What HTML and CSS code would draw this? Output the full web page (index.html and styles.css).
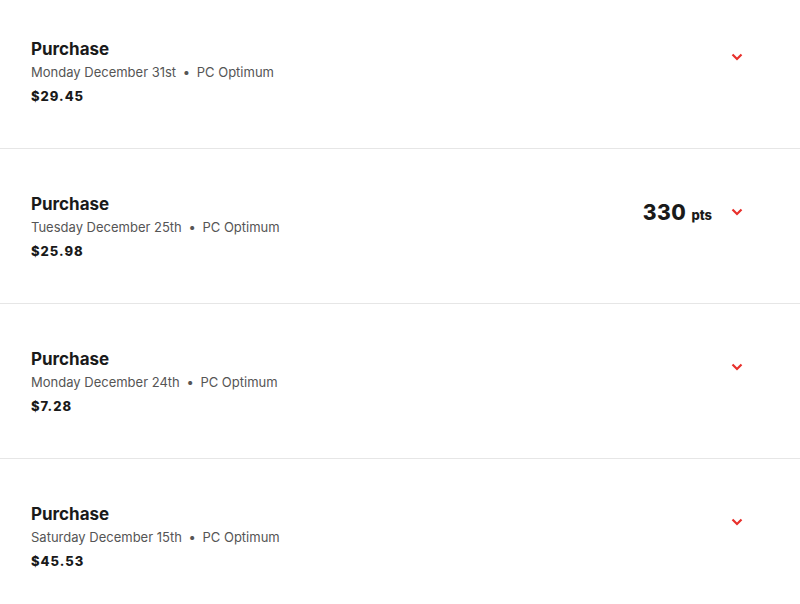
FILE: index.html
```html
<!DOCTYPE html>
<html lang="en">
<head>
  <meta charset="UTF-8">
  <title>Transactions</title>
  <link rel="stylesheet" href="styles.css">
</head>
<body>
  <ul class="transactions">
    <li class="txn">
      <div class="txn-info">
        <div class="txn-title">Purchase</div>
        <div class="txn-meta">Monday December 31st <span class="dot">•</span> PC Optimum</div>
        <div class="txn-amount">$29.45</div>
      </div>
      <div class="txn-side">
        <svg class="chevron" width="12" height="8" viewBox="0 0 12 8"><path d="M1.5 1.5 L6 6 L10.5 1.5" fill="none" stroke="#e8302b" stroke-width="2.2"/></svg>
      </div>
    </li>
    <li class="txn">
      <div class="txn-info">
        <div class="txn-title">Purchase</div>
        <div class="txn-meta">Tuesday December 25th <span class="dot">•</span> PC Optimum</div>
        <div class="txn-amount">$25.98</div>
      </div>
      <div class="txn-side">
        <div class="points">330 <span>pts</span></div>
        <svg class="chevron" width="12" height="8" viewBox="0 0 12 8"><path d="M1.5 1.5 L6 6 L10.5 1.5" fill="none" stroke="#e8302b" stroke-width="2.2"/></svg>
      </div>
    </li>
    <li class="txn">
      <div class="txn-info">
        <div class="txn-title">Purchase</div>
        <div class="txn-meta">Monday December 24th <span class="dot">•</span> PC Optimum</div>
        <div class="txn-amount">$7.28</div>
      </div>
      <div class="txn-side">
        <svg class="chevron" width="12" height="8" viewBox="0 0 12 8"><path d="M1.5 1.5 L6 6 L10.5 1.5" fill="none" stroke="#e8302b" stroke-width="2.2"/></svg>
      </div>
    </li>
    <li class="txn">
      <div class="txn-info">
        <div class="txn-title">Purchase</div>
        <div class="txn-meta">Saturday December 15th <span class="dot">•</span> PC Optimum</div>
        <div class="txn-amount">$45.53</div>
      </div>
      <div class="txn-side">
        <svg class="chevron" width="12" height="8" viewBox="0 0 12 8"><path d="M1.5 1.5 L6 6 L10.5 1.5" fill="none" stroke="#e8302b" stroke-width="2.2"/></svg>
      </div>
    </li>
  </ul>
</body>
</html>
```

FILE: styles.css
```css
body {
  margin: 0;
  background: #ffffff;
  font-family: Inter, "Liberation Sans", sans-serif;
  color: #1a1a1a;
}
.transactions {
  list-style: none;
  margin: -6px 0 0 0;
  padding: 0;
}
.txn {
  display: flex;
  align-items: center;
  justify-content: space-between;
  height: 154px;
  padding: 0 57px 0 31px;
  border-bottom: 1px solid #e6e6e6;
}
.txn-info {
  padding-top: 3px;
}
.txn-title {
  font-size: 17px;
  font-weight: 700;
  line-height: 22px;
}
.txn-meta {
  font-size: 13px;
  color: #555555;
  line-height: 24px;
}
.txn-meta .dot {
  margin: 0 3px;
}
.txn-amount {
  font-size: 13px;
  font-weight: 800;
  letter-spacing: 1px;
  line-height: 24px;
}
.txn-side {
  display: flex;
  align-items: center;
  gap: 19px;
  margin-top: -28px;
}
.points {
  font-size: 21px;
  font-weight: 800;
  letter-spacing: 0.5px;
}
.points span {
  font-size: 13px;
  letter-spacing: 0;
}
.chevron {
  display: block;
}
```
